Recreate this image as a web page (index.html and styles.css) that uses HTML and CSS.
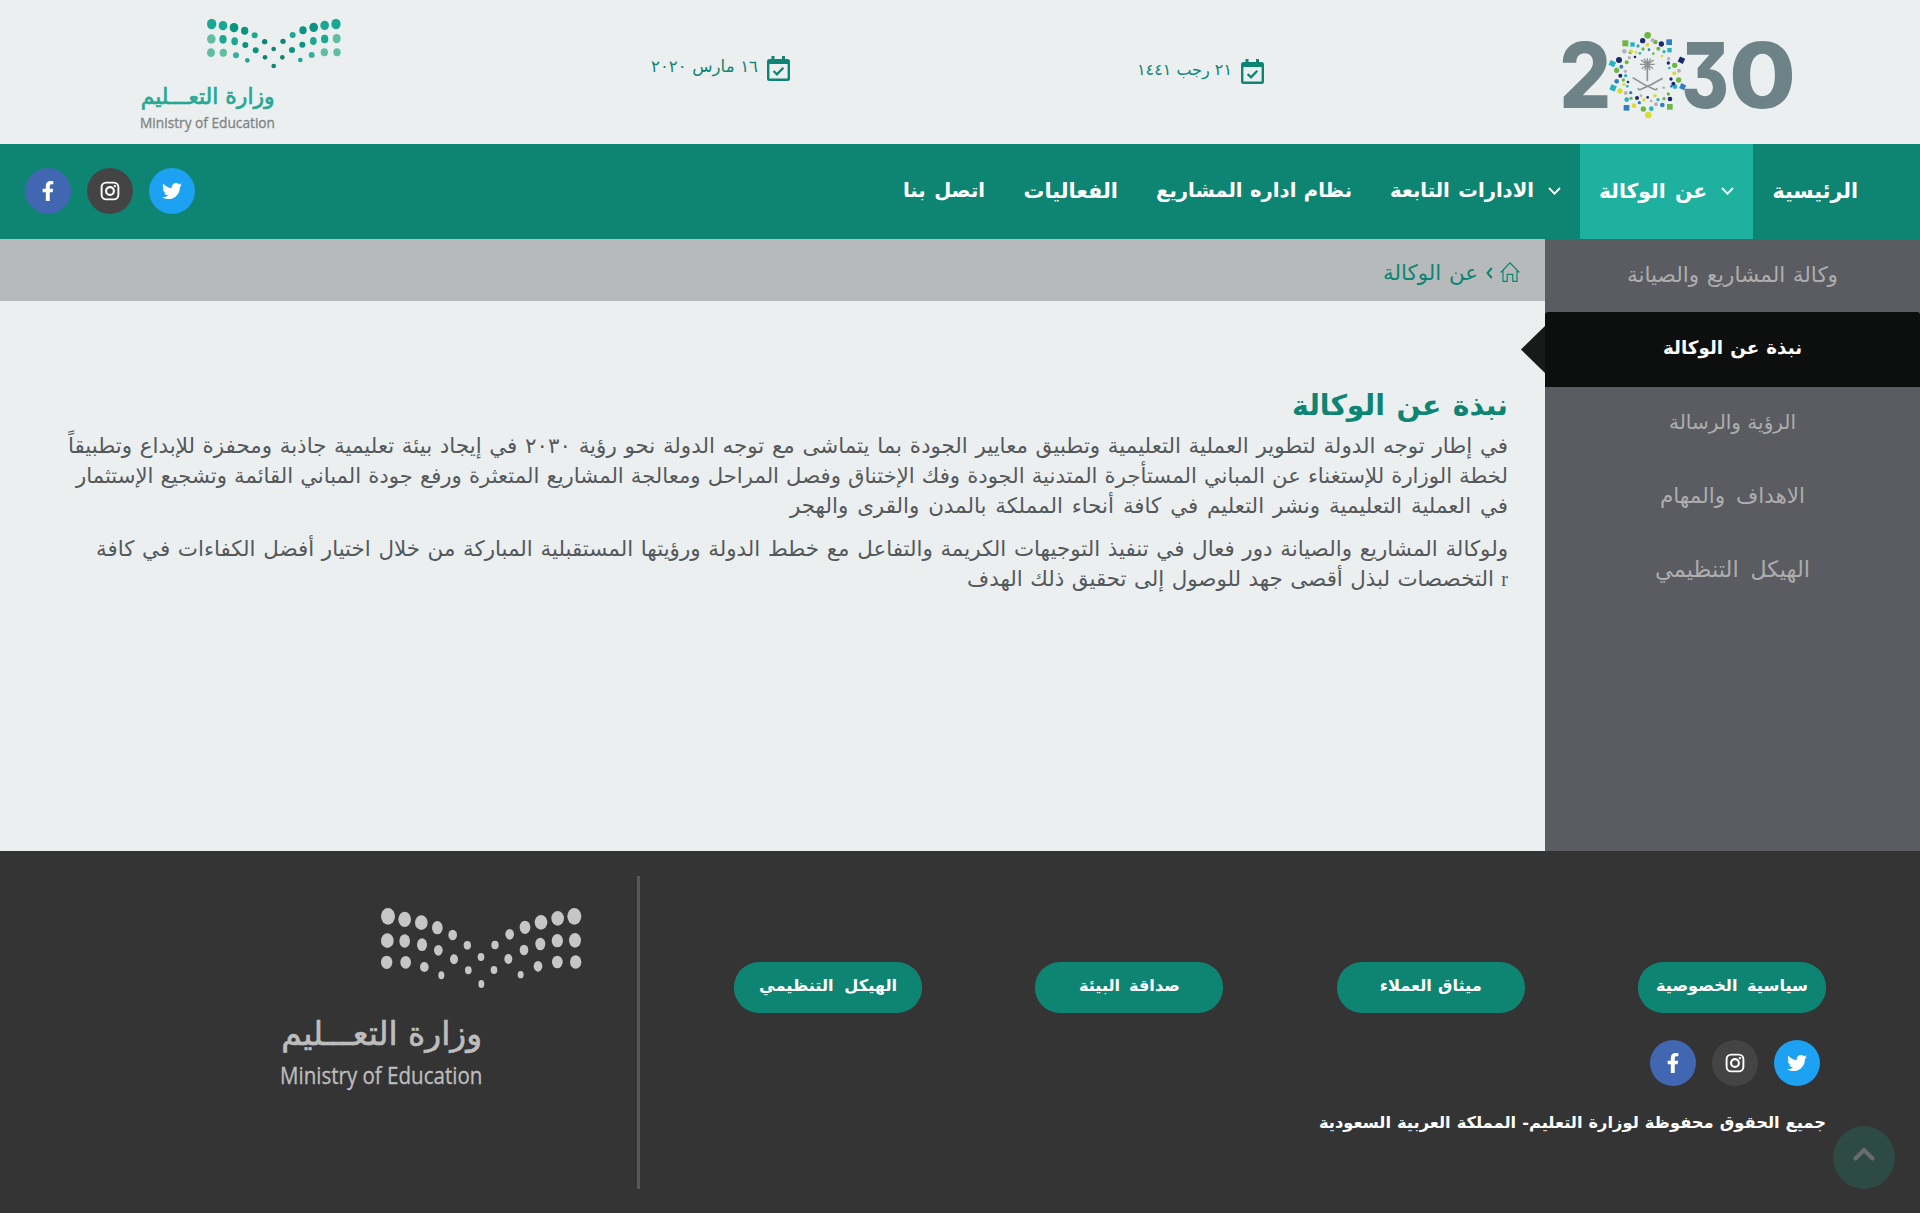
FILE: index.html
```html
<!DOCTYPE html>
<html lang="ar" dir="rtl">
<head>
<meta charset="utf-8">
<title>نبذة عن الوكالة</title>
<link rel="stylesheet" href="styles.css">
</head>
<body>
<svg class="defs" aria-hidden="true">
  <symbol id="facebook" viewBox="0 0 320 512"><path d="M279.14 288l14.22-92.66h-88.91v-60.13c0-25.35 12.42-50.06 52.24-50.06h40.42V6.26S260.43 0 225.36 0c-73.22 0-121.08 44.38-121.08 124.72v70.62H22.89V288h81.39v224h100.17V288z"/></symbol>
  <symbol id="twitter" viewBox="0 0 512 512"><path d="M459.37 151.716c.325 4.548.325 9.097.325 13.645 0 138.72-105.583 298.558-298.558 298.558-59.452 0-114.68-17.219-161.137-47.106 8.447.974 16.568 1.299 25.34 1.299 49.055 0 94.213-16.568 130.274-44.832-46.132-.975-84.792-31.188-98.112-72.772 6.498.974 12.995 1.624 19.818 1.624 9.421 0 18.843-1.3 27.614-3.573-48.081-9.747-84.143-51.98-84.143-102.985v-1.299c13.969 7.797 30.214 12.67 47.431 13.319-28.264-18.843-46.781-51.005-46.781-87.391 0-19.492 5.197-37.36 14.294-52.954 51.655 63.675 129.3 105.258 216.365 109.807-1.624-7.797-2.599-15.918-2.599-24.04 0-57.828 46.782-104.934 104.934-104.934 30.213 0 57.502 12.67 76.67 33.137 23.715-4.548 46.456-13.32 66.599-25.34-7.798 24.366-24.366 44.833-46.132 57.827 21.117-2.273 41.584-8.122 60.426-16.243-14.292 20.791-32.161 39.308-52.628 54.253z"/></symbol>
  <symbol id="instagram" viewBox="0 0 20 20"><rect x="1.600" y="1.600" width="16.800" height="16.800" rx="4.600" fill="none" stroke="#fff" stroke-width="1.900"/><circle cx="10" cy="10" r="3.900" fill="none" stroke="#fff" stroke-width="2.100"/><circle cx="14.900" cy="5.100" r="1.200"/></symbol>
  <symbol id="calendar" viewBox="0 0 23 25"><path d="M4.500 0h3v3h7.500V0h3v3h2.500A2.500 2.500 0 0 1 23 5.500v17A2.500 2.500 0 0 1 20.500 25h-18A2.500 2.500 0 0 1 0 22.500v-17A2.500 2.500 0 0 1 2.500 3h2zM2.400 8v14.600h18.200V8z" fill-rule="evenodd"/><path d="M6.600 15l3.400 3.400 6.300-6.700" fill="none" stroke="#0e8573" stroke-width="2.300"/></symbol>
  <symbol id="down" viewBox="0 0 13 8"><path d="M1 1l5.500 5.600L12 1" fill="none" stroke="#fff" stroke-width="1.800"/></symbol>
</svg>

<header class="top">
  <svg class="vision" viewBox="0 0 840 390" direction="ltr">
    <g class="vision-digits">
      <text x="58" y="295" textLength="156" lengthAdjust="spacingAndGlyphs">2</text>
      <text x="424" y="295" textLength="143" lengthAdjust="spacingAndGlyphs">3</text>
      <text x="567" y="295" textLength="201" lengthAdjust="spacingAndGlyphs">0</text>
    </g>
    <g fill="#6cb644"><circle cx="323" cy="76" r="10"/><rect x="247" y="91" width="18" height="18"/><rect x="416" y="142" width="17" height="17" transform="rotate(25 424 150)" fill="#1b2a70"/><rect x="381" y="282" width="17" height="17"/><circle cx="310" cy="297" r="8"/><circle cx="230" cy="181" r="8"/><circle cx="416" cy="210" r="8"/><circle cx="346" cy="96" r="7"/><circle cx="309" cy="117" r="5"/><circle cx="355" cy="116" r="6"/><circle cx="273" cy="265" r="5"/><circle cx="372" cy="266" r="5"/><circle cx="260" cy="157" r="6"/><circle cx="404" cy="166" r="8"/><circle cx="250" cy="210" r="5"/><circle cx="340" cy="131" r="4"/><circle cx="385" cy="252" r="5"/></g>
    <g fill="#26b3c0"><rect x="208" y="153" width="18" height="16" transform="rotate(25 217 161)"/><rect x="271" y="97" width="13" height="13"/><rect x="382" y="114" width="13" height="13"/><rect x="211" y="225" width="17" height="17" transform="rotate(25 219 233)"/><circle cx="334" cy="296" r="7"/><circle cx="260" cy="269" r="7"/><circle cx="257" cy="197" r="5"/><circle cx="294" cy="108" r="5"/><circle cx="372" cy="125" r="5"/><circle cx="405" cy="230" r="7"/><circle cx="354" cy="269" r="5"/><circle cx="388" cy="174" r="4"/><circle cx="262" cy="229" r="4"/><circle cx="300" cy="130" r="4"/></g>
    <g fill="#2f7fc2"><rect x="379" y="88" width="17" height="17"/><rect x="251" y="285" width="17" height="17"/><rect x="420" y="222" width="16" height="16" transform="rotate(25 428 230)"/><circle cx="230" cy="214" r="7"/><circle cx="367" cy="285" r="7"/><circle cx="244" cy="170" r="6"/><circle cx="271" cy="127" r="5"/><circle cx="327" cy="119" r="4"/><circle cx="298" cy="278" r="5"/><circle cx="394" cy="229" r="4"/><circle cx="272" cy="248" r="5"/></g>
    <g fill="#1b2a70"><circle cx="308" cy="92" r="8"/><circle cx="364" cy="102" r="8"/><circle cx="237" cy="150" r="9"/><circle cx="241" cy="197" r="6"/><circle cx="390" cy="267" r="7"/><circle cx="291" cy="264" r="6"/><circle cx="400" cy="221" r="6"/><circle cx="393" cy="207" r="5"/><circle cx="285" cy="141" r="4"/><circle cx="385" cy="159" r="5"/><circle cx="323" cy="262" r="4"/><circle cx="264" cy="216" r="4"/></g>
    <g fill="#dbdc32"><circle cx="325" cy="315" r="10"/><circle cx="240" cy="243" r="8"/><circle cx="273" cy="124" r="6"/><circle cx="322" cy="104" r="6"/><circle cx="403" cy="190" r="6"/><circle cx="282" cy="287" r="7"/><circle cx="345" cy="257" r="5"/><circle cx="366" cy="138" r="4"/><circle cx="252" cy="223" r="5"/><circle cx="312" cy="270" r="5"/><circle cx="288" cy="127" r="4"/></g>
    <g fill="#b9aeb9"><circle cx="338" cy="91" r="6"/><circle cx="253" cy="124" r="7"/><circle cx="417" cy="182" r="6"/><circle cx="257" cy="249" r="6"/><circle cx="348" cy="283" r="6"/><circle cx="268" cy="143" r="5"/><circle cx="256" cy="184" r="5"/><circle cx="386" cy="146" r="5"/><circle cx="334" cy="273" r="4"/><circle cx="371" cy="233" r="4"/><circle cx="303" cy="257" r="4"/></g>
    <g class="emblem"><path class="palm" d="M322 163L303 150M322 163L312 146M322 163V145M322 163L332 146M322 163L341 150M322 163L300 163M322 163L344 163M322 163L305 176M322 163L339 176M322 163L314 181M322 163L330 181"/><path d="M322 165v48"/><path d="M298 240Q334 226 368 205M347 240Q312 226 278 203M298 240l-4-5M347 240l5-5"/></g>
  </svg>
  <div class="date date-hijri"><svg class="cal"><use href="#calendar"/></svg><span>٢١ رجب ١٤٤١</span></div>
  <div class="date date-greg"><svg class="cal"><use href="#calendar"/></svg><span>١٦ مارس ٢٠٢٠</span></div>
  <svg class="ministry" viewBox="0 0 720 405" direction="ltr">
    <g fill="#1ba893">
      <ellipse cx="275" cy="57" rx="14" ry="16"/><ellipse cx="309" cy="62" rx="13" ry="14"/><ellipse cx="342" cy="68" rx="13" ry="14" fill="#0b9480"/><ellipse cx="374" cy="77" rx="11" ry="12" fill="#0b9480"/><circle cx="404" cy="91" r="9"/><circle cx="434" cy="110" r="8" fill="#0c8573"/><circle cx="461" cy="132" r="7" fill="#0c8573"/><circle cx="489" cy="109" r="8" fill="#0c8573"/><circle cx="518" cy="90" r="9"/><ellipse cx="549" cy="76" rx="11" ry="12" fill="#0b9480"/><ellipse cx="581" cy="67" rx="13" ry="14" fill="#0b9480"/><ellipse cx="614" cy="61" rx="13" ry="14"/><ellipse cx="648" cy="57" rx="14" ry="16"/>
      <ellipse cx="274" cy="102" rx="13" ry="14" fill="#62bea3"/><ellipse cx="309" cy="103" rx="11" ry="13"/><ellipse cx="344" cy="109" rx="10" ry="12"/><circle cx="376" cy="120" r="9" fill="#0c9380"/><circle cx="407" cy="136" r="9" fill="#0c9380"/><circle cx="435" cy="157" r="7" fill="#0c8573"/><circle cx="461" cy="183" r="7" fill="#0c8573"/><circle cx="487" cy="157" r="7" fill="#0c8573"/><circle cx="516" cy="135" r="9" fill="#0c9380"/><circle cx="547" cy="119" r="9" fill="#0c9380"/><ellipse cx="580" cy="108" rx="10" ry="12"/><ellipse cx="614" cy="102" rx="11" ry="13"/><ellipse cx="650" cy="101" rx="12" ry="14" fill="#62bea3"/>
      <ellipse cx="273" cy="143" rx="12" ry="13" fill="#62bea3"/><ellipse cx="310" cy="143" rx="11" ry="12" fill="#62bea3"/><circle cx="348" cy="151" r="9" fill="#36b09a"/><circle cx="382" cy="166" r="7"/><circle cx="541" cy="165" r="7"/><circle cx="575" cy="150" r="9" fill="#36b09a"/><ellipse cx="613" cy="142" rx="11" ry="12" fill="#62bea3"/><ellipse cx="651" cy="142" rx="11" ry="12" fill="#62bea3"/>
    </g>
    <text class="logo-ar" x="62" y="298" font-size="66" textLength="402" lengthAdjust="spacingAndGlyphs" fill="#26a894" stroke="#26a894">وزارة التعـــليم</text>
    <text class="logo-en" x="60" y="368" font-size="46" textLength="405" lengthAdjust="spacingAndGlyphs" fill="#808584" stroke="#808584">Ministry of Education</text>
  </svg>
</header>

<nav class="nav">
  <ul class="menu">
    <li><a><span class="fit w86">الرئيسية</span></a></li>
    <li class="current"><a><svg class="chev"><use href="#down"/></svg><span class="fit w108">عن الوكالة</span></a></li>
    <li><a><svg class="chev"><use href="#down"/></svg><span class="fit w143">الادارات التابعة</span></a></li>
    <li><a><span class="fit w196">نظام اداره المشاريع</span></a></li>
    <li><a><span class="fit w95">الفعاليات</span></a></li>
    <li><a><span class="fit w82">اتصل بنا</span></a></li>
  </ul>
  <div class="social">
    <a class="tw"><svg><use href="#twitter"/></svg></a>
    <a class="ig"><svg><use href="#instagram"/></svg></a>
    <a class="fb"><svg><use href="#facebook"/></svg></a>
  </div>
</nav>

<main class="main">
  <aside class="side">
    <a class="s1"><span>وكالة المشاريع والصيانة</span></a>
    <a class="on"><span>نبذة عن الوكالة</span></a>
    <a class="s3"><span>الرؤية والرسالة</span></a>
    <a class="s4"><span>الاهداف والمهام</span></a>
    <a class="s5"><span>الهيكل التنظيمي</span></a>
  </aside>
  <section class="content">
    <div class="crumbs">
      <svg class="house" viewBox="0 0 20 20"><path d="M.7 10.500L10 .8l9.300 9.700M3 8.500v10.900h4.200v-7h5.600v7H17V8.500" /></svg>
      <svg class="sep" viewBox="0 0 7 12"><path d="M5.800 1L1.500 6l4.300 5"/></svg>
      <span>عن الوكالة</span>
    </div>
    <article class="article">
      <h1>نبذة عن الوكالة</h1>
      <p>
        <span class="line l1">في إطار توجه الدولة لتطوير العملية التعليمية وتطبيق معايير الجودة بما يتماشى مع توجه الدولة نحو رؤية ٢٠٣٠ في إيجاد بيئة تعليمية جاذبة ومحفزة للإبداع وتطبيقاً</span>
        <span class="line l2">لخطة الوزارة للإستغناء عن المباني المستأجرة المتدنية الجودة وفك الإختناق وفصل المراحل ومعالجة المشاريع المتعثرة ورفع جودة المباني القائمة وتشجيع الإستثمار</span>
        <span class="line l3">في العملية التعليمية ونشر التعليم في كافة أنحاء المملكة بالمدن والقرى والهجر</span>
      </p>
      <p>
        <span class="line l4">ولوكالة المشاريع والصيانة دور فعال في تنفيذ التوجيهات الكريمة والتفاعل مع خطط الدولة ورؤيتها المستقبلية المباركة من خلال اختيار أفضل الكفاءات في كافة</span>
        <span class="line l5"><span class="latin">r</span> التخصصات لبذل أقصى جهد للوصول إلى تحقيق ذلك الهدف</span>
      </p>
    </article>
  </section>
</main>

<footer class="footer">
  <div class="foot-main">
    <div class="pills">
      <a><span class="p1">سياسية الخصوصية</span></a>
      <a><span class="p2">ميثاق العملاء</span></a>
      <a><span class="p3">صداقة البيئة</span></a>
      <a><span class="p4">الهيكل التنظيمي</span></a>
    </div>
    <div class="social">
      <a class="tw"><svg><use href="#twitter"/></svg></a>
      <a class="ig"><svg><use href="#instagram"/></svg></a>
      <a class="fb"><svg><use href="#facebook"/></svg></a>
    </div>
    <p class="copy">جميع الحقوق محفوظة لوزارة التعليم- المملكة العربية السعودية</p>
  </div>
  <svg class="foot-logo" viewBox="0 48 1110 720" direction="ltr">
    <g fill="#c6c6c6">
      <ellipse cx="414" cy="169" rx="21" ry="25"/><ellipse cx="464" cy="178" rx="19" ry="23"/><ellipse cx="514" cy="188" rx="19" ry="22"/><ellipse cx="562" cy="203" rx="16" ry="20"/><ellipse cx="608" cy="225" rx="13" ry="16"/><ellipse cx="652" cy="256" rx="11" ry="13"/><ellipse cx="693" cy="291" rx="10" ry="12"/><ellipse cx="735" cy="255" rx="11" ry="13"/><ellipse cx="779" cy="223" rx="13" ry="16"/><ellipse cx="825" cy="202" rx="16" ry="20"/><ellipse cx="873" cy="187" rx="19" ry="22"/><ellipse cx="923" cy="175" rx="19" ry="22"/><ellipse cx="973" cy="169" rx="21" ry="25"/>
      <ellipse cx="412" cy="242" rx="19" ry="22"/><ellipse cx="464" cy="243" rx="16" ry="20"/><ellipse cx="516" cy="254" rx="15" ry="19"/><ellipse cx="565" cy="271" rx="13" ry="16"/><ellipse cx="612" cy="298" rx="12" ry="15"/><ellipse cx="655" cy="331" rx="10" ry="12"/><ellipse cx="694" cy="372" rx="9" ry="12"/><ellipse cx="732" cy="330" rx="10" ry="12"/><ellipse cx="775" cy="297" rx="12" ry="15"/><ellipse cx="822" cy="270" rx="13" ry="16"/><ellipse cx="871" cy="252" rx="15" ry="19"/><ellipse cx="922" cy="242" rx="17" ry="20"/><ellipse cx="975" cy="241" rx="18" ry="22"/>
      <ellipse cx="410" cy="307" rx="17" ry="20"/><ellipse cx="467" cy="307" rx="16" ry="19"/><ellipse cx="523" cy="321" rx="13" ry="15"/><ellipse cx="574" cy="346" rx="9" ry="12"/><ellipse cx="812" cy="344" rx="9" ry="11"/><ellipse cx="864" cy="319" rx="13" ry="16"/><ellipse cx="922" cy="306" rx="16" ry="19"/><ellipse cx="977" cy="306" rx="17" ry="20"/>
    </g>
    <text class="logo-ar" x="94" y="556" font-size="100" textLength="602" lengthAdjust="spacingAndGlyphs" fill="#bdbdbd" stroke="#bdbdbd">وزارة التعـــليم</text>
    <text class="logo-en" x="90" y="672" font-size="70" textLength="607" lengthAdjust="spacingAndGlyphs" fill="#bdbdbd" stroke="#bdbdbd">Ministry of Education</text>
  </svg>
  <a class="to-top"><svg viewBox="0 0 22 14"><path d="M2.500 11.500L11 3l8.500 8.500"/></svg></a>
</footer>
</body>
</html>
```
FILE: styles.css
```css
* { box-sizing: border-box; }
body {
  margin: 0;
  background: #ebeff0;
  font-family: "DejaVu Sans", sans-serif;
  color: #55585b;
}
svg { display: block; flex: none; }
.defs { position: absolute; width: 0; height: 0; }
p, h1, ul { margin: 0; padding: 0; }

/* Text set to a fixed measure by widening its word spaces */
.fit, .date span, .side span, .crumbs span, .pills span, .copy, .line, h1 {
  white-space: nowrap;
  text-align: justify;
  text-align-last: justify;
}

/* Header */
.top {
  display: flex;
  align-items: flex-start;
  height: 144px;
  padding-right: 100px;
}
.vision { width: 280px; height: 130px; margin-top: 10px; }
.vision-digits {
  fill: #6d8387;
  font: 800 274px Inter, sans-serif;
  font-feature-settings: "cv09";
}
.emblem { fill: none; stroke: #8c9192; stroke-width: 5; }
.palm { stroke-width: 4; }
.date {
  display: flex;
  align-items: center;
  justify-content: space-between;
  color: #0e8573;
  fill: #0e8573;
  height: 30px;
  line-height: 26px;
}
.date span { padding-bottom: 2px; }
.date-hijri { width: 127px; margin: 56px 276px 0 347px; }
.date-greg { width: 139px; margin: 53px 0 0 291px; }
.date-hijri span { width: 95px; font-size: 16px; }
.date-greg span { width: 107px; font-size: 16.6px; }
.cal { width: 23px; height: 25px; }
.ministry { width: 240px; height: 135px; margin-top: 5px; }
.logo-ar { font-family: "DejaVu Sans", sans-serif; stroke-width: 2; }
.logo-en { font-family: "Open Sans", sans-serif; stroke-width: 1; }

/* Navigation */
.nav {
  display: flex;
  justify-content: space-between;
  height: 95px;
  padding: 0 43px 0 25px;
  background: #0e8573;
}
.menu { display: flex; list-style: none; }
.menu a {
  display: flex;
  align-items: center;
  gap: 14px;
  height: 95px;
  padding: 0 19px 2px;
  color: #fff;
  font-size: 19.6px;
  font-weight: 700;
  line-height: 30px;
}
.current { background: #1fb19f; }
.chev { width: 13px; height: 8px; }
.w86 { width: 86px; font-size: 20.6px; }
.w108 { width: 108px; font-size: 20.3px; }
.w143 { width: 144px; }
.w196 { width: 196px; }
.w95 { width: 95px; font-size: 20.8px; }
.w82 { width: 82px; }

.social { display: flex; align-items: center; gap: 16px; }
.nav .social { padding-bottom: 2px; }
.social a {
  display: flex;
  align-items: center;
  justify-content: center;
  width: 46px;
  height: 46px;
  border-radius: 50%;
  fill: #fff;
}
.social svg { width: 20px; height: 20px; }
.tw { background: #1da1f2; }
.ig { background: #444; }
.fb { background: #4267b2; }

/* Body */
.main { display: flex; height: 612px; }
.side { width: 375px; background: #5a5c61; }
.side a {
  position: relative;
  display: flex;
  align-items: center;
  justify-content: center;
  height: 73.5px;
  padding-bottom: 4px;
  color: #adadae;
  font-size: 21.5px;
}
.side .on {
  height: 75px;
  border-radius: 3px 3px 0 0;
  background: #0d0f0e;
  color: #fff;
  font-size: 18.3px;
  font-weight: 700;
}
.side .s1 { height: 73px; padding-bottom: 2px; }
.on::after {
  content: "";
  position: absolute;
  top: 14px;
  right: 375px;
  width: 24px;
  height: 47px;
  background: #181a19;
  clip-path: polygon(100% 0, 0 50%, 100% 100%);
}
.s1 span { width: 211px; }
.on span { width: 139px; }
.s3 span { width: 127px; font-size: 20px; }
.s4 span { width: 145px; }
.s5 span { width: 155px; font-size: 22.5px; }

.content { flex: 1; }
.crumbs {
  display: flex;
  align-items: center;
  height: 62px;
  padding: 4px 25px 0 0;
  background: #b6babb;
  color: #0e8573;
  font-size: 21.4px;
}
.crumbs svg { fill: none; stroke: #0e8573; }
.crumbs span { width: 95px; }
.house { width: 20px; height: 20px; stroke-width: 1.2; }
.sep { width: 7px; height: 12px; margin: 2px 7px 0 8px; stroke-width: 2; }
.article { padding: 85px 37px 0 0; }
h1 {
  width: 216px;
  color: #0e8573;
  font-size: 28.3px;
  line-height: 40px;
}
.article p { margin-top: 5px; font-size: 21.4px; }
.article p + p { margin-top: 13px; }
.line { display: block; line-height: 30px; }
.l1 { width: 1440px; }
.l2 { width: 1432px; font-size: 21.2px; }
.l3 { width: 718px; }
.l4 { width: 1412px; }
.l5 { width: 541px; }
.latin { font-family: "Liberation Serif", serif; font-size: 20px; }

/* Footer */
.footer {
  position: relative;
  display: flex;
  height: 362px;
  padding: 25px 0 24px;
  background: #343434;
}
.foot-main {
  width: 1283px;
  padding: 86px 94px 0 0;
  border-left: 3px solid #55595c;
}
.pills { display: flex; gap: 113.3px; }
.pills a {
  display: flex;
  align-items: center;
  justify-content: center;
  width: 188px;
  height: 51px;
  padding-bottom: 4px;
  border-radius: 25px;
  background: #0e8573;
  color: #fff;
  font-size: 16.2px;
  font-weight: 700;
}
.p1 { width: 152px; }
.p2 { width: 102px; }
.p3 { width: 101px; }
.p4 { width: 138px; }
.foot-main .social { margin: 27px 6px 22px 0; }
.copy {
  width: 507px;
  color: #fff;
  font-size: 16.3px;
  font-weight: 700;
  line-height: 30px;
}
.foot-logo { width: 370px; height: 240px; margin-right: 17px; }
.to-top {
  position: absolute;
  right: 25px;
  bottom: 24px;
  display: flex;
  justify-content: center;
  width: 62px;
  height: 63px;
  padding-top: 21px;
  border-radius: 50%;
  background: #2d4a44;
}
.to-top svg {
  width: 22px;
  height: 14px;
  fill: none;
  stroke: #6c6c6c;
  stroke-width: 4;
  stroke-linecap: round;
}
```
